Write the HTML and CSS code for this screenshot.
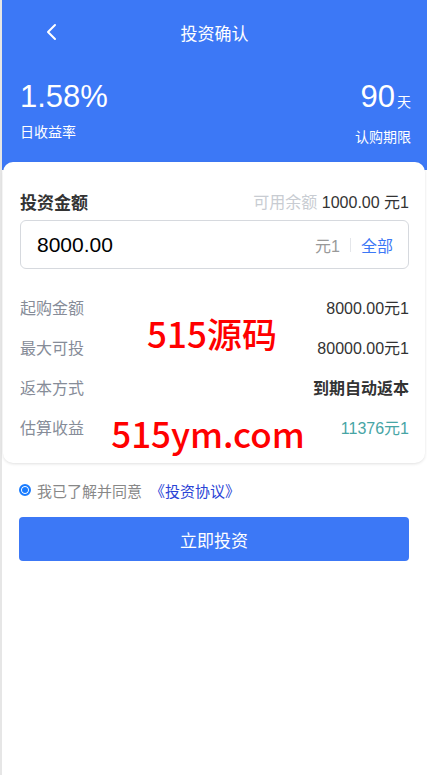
FILE: index.html
```html
<!DOCTYPE html>
<html lang="zh-CN">
<head>
    <meta charset="UTF-8">
    <meta name="viewport" content="width=device-width, initial-scale=1.0">
    <title>投资确认</title>
    <link rel="stylesheet" href="styles.css">
</head>
<body>
    <div class="page">
        <div class="header">
            <div class="nav">
                <span class="back">
                    <svg width="14" height="18" viewBox="0 0 14 18"><path d="M10 2 L3 9 L10 16" fill="none" stroke="#fff" stroke-width="2" stroke-linecap="round" stroke-linejoin="round"/></svg>
                </span>
                <span class="title">投资确认</span>
            </div>
            <div class="stats">
                <div class="stat">
                    <div class="stat-value">1.58%</div>
                    <div class="stat-label">日收益率</div>
                </div>
                <div class="stat right">
                    <div class="stat-value">90<span class="unit">天</span></div>
                    <div class="stat-label">认购期限</div>
                </div>
            </div>
        </div>

        <div class="card">
            <div class="amount-head">
                <span class="amount-title">投资金额</span>
                <span class="balance"><span class="muted">可用余额</span> 1000.00 元1</span>
            </div>
            <div class="amount-input">
                <span class="amount-value">8000.00</span>
                <span class="amount-unit">元1</span>
                <span class="divider"></span>
                <span class="all">全部</span>
            </div>
            <div class="info-row">
                <span class="label">起购金额</span>
                <span class="value">8000.00元1</span>
            </div>
            <div class="info-row">
                <span class="label">最大可投</span>
                <span class="value">80000.00元1</span>
            </div>
            <div class="info-row">
                <span class="label">返本方式</span>
                <span class="value bold">到期自动返本</span>
            </div>
            <div class="info-row">
                <span class="label">估算收益</span>
                <span class="value profit">11376元1</span>
            </div>
            <div class="mark mark-1">515源码</div>
            <div class="mark mark-2">515ym.com</div>
        </div>

        <div class="agree">
            <span class="radio"></span>
            <span class="agree-text">我已了解并同意</span>
            <span class="agree-link">《投资协议》</span>
        </div>

        <button class="submit">立即投资</button>
    </div>
</body>
</html>
```

FILE: styles.css
```css
body {
    margin: 0;
    font-family: "Liberation Sans", "Noto Sans CJK SC", sans-serif;
    background-color: #fff;
}

.page {
    width: 425px;
    min-height: 775px;
    border-left: 2px solid #e6e6e6;
}

.header {
    background-color: #3c78f6;
    color: #fff;
    height: 170px;
}

.nav {
    height: 64px;
    display: flex;
    align-items: center;
    position: relative;
}

.back {
    margin-left: 43px;
    display: flex;
}

.title {
    position: absolute;
    left: 0;
    right: 0;
    text-align: center;
    font-size: 17px;
    pointer-events: none;
}

.stats {
    display: flex;
    justify-content: space-between;
    padding: 15px 16px 0 18px;
}

.stat-value {
    font-size: 31px;
    line-height: 36px;
}

.unit {
    font-size: 14px;
    margin-left: 2px;
}

.stat-label {
    font-size: 14px;
    line-height: 18px;
    margin-top: 8px;
}

.right {
    text-align: right;
}

.card {
    position: relative;
    margin: -8px 2px 0 1px;
    background-color: #fff;
    border-radius: 10px;
    box-shadow: 0 1px 3px rgba(0, 0, 0, 0.12);
    padding: 0 16px 16px 17px;
}

.amount-head {
    display: flex;
    justify-content: space-between;
    align-items: center;
    height: 24px;
    padding-top: 27px;
}

.amount-title {
    font-size: 17px;
    font-weight: bold;
    color: #333;
}

.balance {
    font-size: 16px;
    color: #333;
}

.muted {
    color: #c8ccd2;
}

.amount-input {
    display: flex;
    align-items: center;
    height: 47px;
    margin-top: 7px;
    border: 1px solid #d6d9de;
    border-radius: 6px;
    padding: 0 15px 0 16px;
}

.amount-value {
    flex: 1;
    font-size: 21px;
    color: #000;
}

.amount-unit {
    font-size: 16px;
    color: #999;
}

.divider {
    width: 1px;
    height: 14px;
    background-color: #e4e6ea;
    margin: 0 10px;
}

.all {
    font-size: 16px;
    color: #3c78f6;
}

.info-row {
    display: flex;
    justify-content: space-between;
    align-items: center;
    height: 40px;
    font-size: 16px;
}

.amount-input + .info-row {
    margin-top: 18px;
}

.label {
    color: #868c98;
}

.value {
    color: #333;
}

.bold {
    font-weight: bold;
}

.profit {
    color: #47a5a5;
}

.mark {
    position: absolute;
    left: 0;
    text-align: center;
    color: #f00;
    font-family: "Noto Sans CJK SC", sans-serif;
    font-weight: 500;
    line-height: 50px;
}

.mark-1 {
    top: 146px;
    right: 4px;
    font-size: 35px;
}

.mark-2 {
    top: 246px;
    right: 12px;
    font-size: 35px;
}

.agree {
    display: flex;
    align-items: center;
    height: 20px;
    margin-top: 17px;
    padding-left: 17px;
    font-size: 15px;
}

.radio {
    width: 8px;
    height: 8px;
    border: 2px solid #1a7cff;
    border-radius: 50%;
    background-color: #1a7cff;
    box-shadow: inset 0 0 0 1px #fff;
    margin-right: 6px;
}

.agree-text {
    color: #888;
}

.agree-link {
    color: #2b44d6;
    margin-left: 8px;
}

.submit {
    display: block;
    width: 390px;
    height: 44px;
    margin: 17px 0 0 17px;
    border: none;
    border-radius: 4px;
    background-color: #3c78f6;
    color: #fff;
    font-family: "Liberation Sans", "Noto Sans CJK SC", sans-serif;
    font-size: 17px;
}
```
